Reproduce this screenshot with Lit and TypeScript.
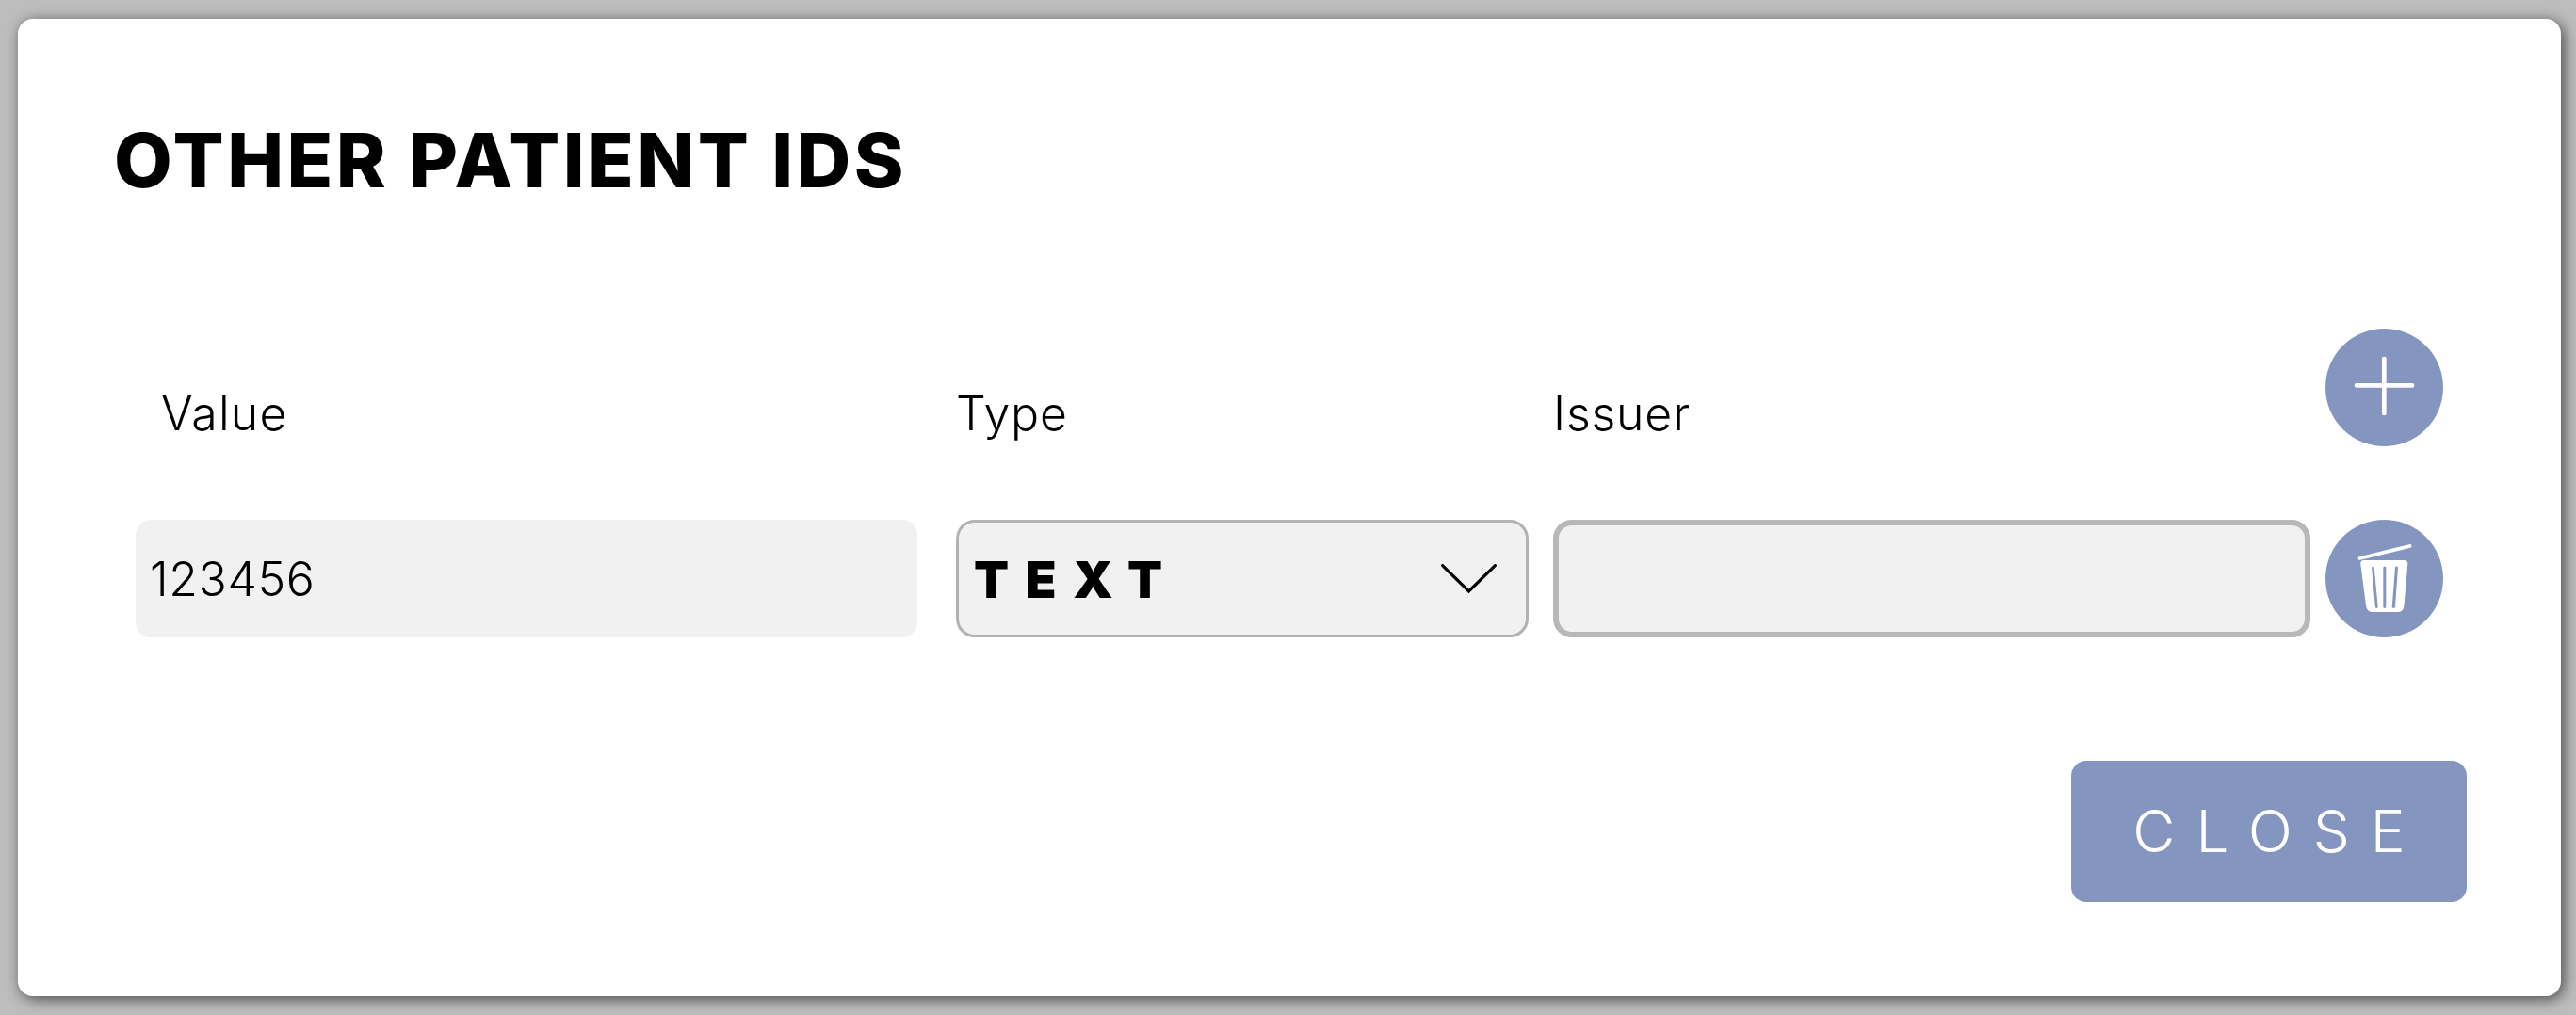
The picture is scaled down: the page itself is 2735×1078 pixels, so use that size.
import { LitElement, html, css } from "lit";
import { customElement } from "lit/decorators.js";

@customElement("app-root")
export class AppRoot extends LitElement {
  static styles = css`
    :host {
      display: block;
      box-sizing: border-box;
      width: 100vw;
      height: 100vh;
      padding: 20px 16px 20px 19px;
      background: #bdbdbd;
      font-family: "Inter", sans-serif;
      color: #000;
      overflow: hidden;
    }
    .modal {
      box-sizing: border-box;
      height: 100%;
      background: #fff;
      border-radius: 16px;
      box-shadow: 3px 3px 15px rgba(0, 0, 0, 0.62);
      display: flex;
      flex-direction: column;
      padding: 0 100px 100px 102px;
    }
    h1 {
      margin: 102px 0 0;
      font: 800 80px/1.2 "Inter", sans-serif;
      letter-spacing: 3.400px;
      height: 227px;
    }
    .row {
      display: flex;
      padding-left: 23px;
    }
    .labels {
      height: 125px;
      align-items: flex-end;
      margin-bottom: 78px;
    }
    .labels span {
      font: 300 50px/1 "Inter", sans-serif;
      letter-spacing: 0.8px;
      padding-bottom: 10px;
    }
    .v { width: 830px; box-sizing: border-box; margin-right: 41px; }
    .labels .v { padding-left: 27px; letter-spacing: 1.2px; }
    .t { width: 608px; box-sizing: border-box; margin-right: 26px; }
    .i { width: 804px; box-sizing: border-box; margin-right: 16px; }
    .field {
      height: 125px;
      box-sizing: border-box;
      background: #f1f1f1;
      display: flex;
      align-items: center;
    }
    .value {
      border-radius: 16px;
      padding-left: 15px;
      font: 300 50px/1 "Inter", sans-serif;
      letter-spacing: 0.6px;
    }
    .select {
      border: 3px solid #b2b2b2;
      border-radius: 20px;
      padding: 0 31px 0 16px;
      justify-content: space-between;
      font: 900 54px/1 "Inter", sans-serif;
      letter-spacing: 17.500px;
    }
    .select span { padding-top: 2px; }
    .select svg { width: 59px; height: 31px; display: block; }
    .issuer {
      border: 6px solid #b8b8bb;
      border-radius: 20px;
    }
    .round {
      width: 125px;
      height: 125px;
      border-radius: 50%;
      background: #8496c0;
      flex: none;
    }
    .round svg { width: 125px; height: 125px; display: block; }
    .footer {
      margin-top: auto;
      display: flex;
      justify-content: flex-end;
    }
    .close {
      box-sizing: border-box;
      width: 420px;
      height: 150px;
      padding-left: 22px;
      border-radius: 16px;
      background: #8496c0;
      color: #fff;
      display: flex;
      align-items: center;
      justify-content: center;
      font: 300 62px/1 "Inter", sans-serif;
      letter-spacing: 22px;
    }
  `;

  render() {
    return html`
      <div class="modal">
        <h1>OTHER PATIENT IDS</h1>
        <div class="row labels">
          <span class="v">Value</span>
          <span class="t">Type</span>
          <span class="i">Issuer</span>
          <div class="round">
            <svg viewBox="0 0 125 125" fill="none" stroke="#fff" stroke-width="4.700" stroke-linecap="round">
              <path d="M62.300 32V90M33 60.300H92"/>
            </svg>
          </div>
        </div>
        <div class="row">
          <div class="field v value">123456</div>
          <div class="field t select">
            <span>TEXT</span>
            <svg viewBox="0 0 59 31" fill="none" stroke="#000" stroke-width="3.200" stroke-linecap="round" stroke-linejoin="miter">
              <path d="M1.600 1.600L29.500 29L57.400 1.600"/>
            </svg>
          </div>
          <div class="field i issuer"></div>
          <div class="round">
            <svg viewBox="0 0 125 125">
              <path d="M36.500 41L89.500 28" stroke="#fff" stroke-width="3.800" stroke-linecap="round" fill="none"/>
              <path fill="#fff" fill-rule="evenodd" d="M41 43H84Q87.500 43 87.300 47L83.500 91Q83 98 77 98H49.500Q44 98 43 91L37.300 47Q37 43 41 43ZM49 50.500L53 93Q54.400 95 55.700 93L51.700 50.500Q50.300 48.500 49 50.500ZM61.300 50.500V93Q62.800 95 64.300 93V50.500Q62.800 48.500 61.300 50.500ZM74 50.500L70.700 93Q72.300 95 74 93L77 50.500Q75.500 48.500 74 50.500Z"/>
            </svg>
          </div>
        </div>
        <div class="footer"><div class="close">CLOSE</div></div>
      </div>
    `;
  }
}
